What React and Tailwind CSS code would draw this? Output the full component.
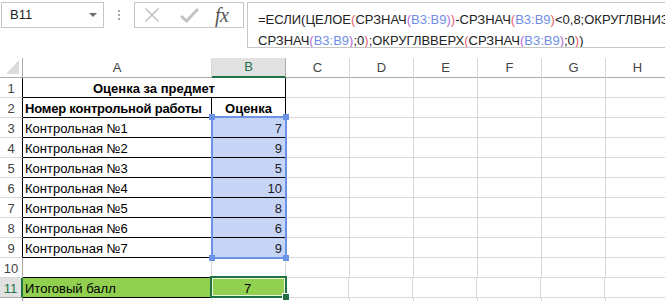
import React from "react";

const COLS = [
  { key: "A", w: "w-[189px]" },
  { key: "B", w: "w-[74px]" },
  { key: "C", w: "w-[64px]" },
  { key: "D", w: "w-[64px]" },
  { key: "E", w: "w-[64px]" },
  { key: "F", w: "w-[64px]" },
  { key: "G", w: "w-[64px]" },
  { key: "H", w: "w-[64px]" },
];

const marks = [
  ["Контрольная №1", 7],
  ["Контрольная №2", 9],
  ["Контрольная №3", 5],
  ["Контрольная №4", 10],
  ["Контрольная №5", 8],
  ["Контрольная №6", 6],
  ["Контрольная №7", 9],
];

// formula bar pieces: k = black, r = level-1 paren, p = level-2 paren, b = reference
const line1 = [
  ["k", "=ЕСЛИ(ЦЕЛОЕ"], ["r", "("], ["k", "СРЗНАЧ"], ["p", "("], ["b", "B3:B9"], ["p", ")"], ["r", ")"],
  ["k", "-СРЗНАЧ"], ["r", "("], ["b", "B3:B9"], ["r", ")"], ["k", "<0,8;ОКРУГЛВНИЗ"], ["r", "("],
];
const line2 = [
  ["k", "СРЗНАЧ"], ["p", "("], ["b", "B3:B9"], ["p", ")"], ["k", ";0"], ["r", ")"],
  ["k", ";ОКРУГЛВВЕРХ"], ["r", "("], ["k", "СРЗНАЧ"], ["p", "("], ["b", "B3:B9"], ["p", ")"],
  ["k", ";0"], ["r", ")"], ["k", ")"],
];

const tone = {
  k: "text-[#222]",
  r: "text-[#e8606f]",
  p: "text-[#b36ad8]",
  b: "text-[#6f8fe6]",
};

function Formula({ parts }) {
  return (
    <div className="h-[21px] whitespace-nowrap">
      {parts.map(([t, s], i) => (
        <span key={i} className={tone[t]}>
          {s}
        </span>
      ))}
    </div>
  );
}

function FormulaBar() {
  return (
    <div className="flex items-start h-[58px] pt-[2px] pl-[1px] text-[13px]">
      <div className="w-[103px] h-[26px] border border-[#c6c6c6] flex items-center pl-[8px] pr-[6px] text-[#222]">
        <span className="flex-1">B11</span>
        <span className="w-0 h-0 border-l-[4px] border-r-[4px] border-t-[4px] border-l-transparent border-r-transparent border-t-[#6d6d6d]" />
      </div>
      <div className="w-[30px] h-[26px] flex flex-col items-center justify-center gap-[2px]">
        <span className="w-[2px] h-[2px] bg-[#a6a6a6]" />
        <span className="w-[2px] h-[2px] bg-[#a6a6a6]" />
        <span className="w-[2px] h-[2px] bg-[#a6a6a6]" />
      </div>
      <div className="w-[110px] h-[26px] border border-[#c6c6c6] flex items-center pl-[9px]">
        <svg width="16" height="16" viewBox="0 0 16 16" className="mr-[20px]">
          <path d="M1.5 1.5 L14.5 14.5 M14.5 1.5 L1.5 14.5" stroke="#c3c3c3" strokeWidth="1.6" fill="none" />
        </svg>
        <svg width="19" height="16" viewBox="0 0 19 16" className="mr-[16px]">
          <path d="M1 9 L6.5 14 L18 2" stroke="#c3c3c3" strokeWidth="3" fill="none" />
        </svg>
        <span className="text-[20px] italic text-[#555] font-['Liberation_Serif',serif] leading-none tracking-[-0.5px]">
          fx
        </span>
      </div>
      <div className="ml-[3px] flex-1 h-[46px] border border-r-0 border-[#c6c6c6] pl-[10px] pt-[6px] leading-[21px] overflow-hidden text-[13px]">
        <Formula parts={line1} />
        <Formula parts={line2} />
      </div>
    </div>
  );
}

function HeaderRow() {
  return (
    <div className="flex h-[20px]">
      <div className="w-[23px] shrink-0 border-r border-b border-[#ababab]">
        <svg width="22" height="19" viewBox="0 0 22 19">
          <polygon points="19,2 19,16 6,16" fill="#dcdcdc" />
        </svg>
      </div>
      {COLS.map((c) =>
        c.key === "B" ? (
          <div
            key={c.key}
            className={`${c.w} shrink-0 bg-[#e1e1e1] border-r border-[#ababab] border-b-2 border-b-[#217346] flex items-center justify-center text-[#217346] text-[13px]`}
          >
            {c.key}
          </div>
        ) : (
          <div
            key={c.key}
            className={`${c.w} shrink-0 border-r border-[#d9d9d9] border-b border-b-[#ababab] flex items-center justify-center text-[#444] text-[13px]`}
          >
            {c.key}
          </div>
        )
      )}
    </div>
  );
}

function RowHead({ n, mode }) {
  if (mode === "active") {
    return (
      <div className="w-[23px] shrink-0 bg-[#e1e1e1] border-r-2 border-[#217346] border-b border-b-[#ababab] flex items-end justify-center leading-[16px] text-[#217346] text-[13px]">
        {n}
      </div>
    );
  }
  return (
    <div
      className={`w-[23px] shrink-0 border-b border-[#d9d9d9] border-r flex items-end justify-center leading-[16px] text-[#444] text-[13px] ${
        mode === "table" ? "border-r-black" : "border-r-[#ababab]"
      }`}
    >
      {n}
    </div>
  );
}

function Blank({ w, dark }) {
  return (
    <div
      className={`${w} shrink-0 border-r border-b border-[#d9d9d9] ${dark ? "border-b-black" : ""}`}
    />
  );
}

function Rest() {
  return COLS.slice(2).map((c) => <Blank key={c.key} w={c.w} />);
}

export default function App() {
  return (
    <div className="w-[665px] h-[301px] overflow-hidden bg-white font-['Liberation_Sans',Arial,sans-serif] text-black">
      <FormulaBar />
      <div className="relative text-[13px]">
        <HeaderRow />

        {/* row 1 - merged title */}
        <div className="flex h-[20px]">
          <RowHead n={1} mode="table" />
          <div className="w-[263px] shrink-0 border-r border-b border-black flex items-end justify-center leading-[16px] font-bold">
            Оценка за предмет
          </div>
          <Rest />
        </div>

        {/* row 2 */}
        <div className="flex h-[20px]">
          <RowHead n={2} mode="table" />
          <div className="w-[189px] shrink-0 border-r border-b border-black flex items-end pl-[2px] leading-[16px] font-bold whitespace-nowrap tracking-[-0.2px]">
            Номер контрольной работы
          </div>
          <div className="w-[74px] shrink-0 border-r border-b border-black flex items-end justify-center leading-[16px] font-bold">
            Оценка
          </div>
          <Rest />
        </div>

        {marks.map(([name, v], i) => (
          <div key={name} className="flex h-[20px]">
            <RowHead n={i + 3} mode="table" />
            <div className="w-[189px] shrink-0 border-r border-b border-black flex items-end pl-[2px] leading-[16px]">
              {name}
            </div>
            <div className="w-[74px] shrink-0 bg-[#c6d4f5] border-r border-b border-black flex items-end justify-end pr-[3px] leading-[16px] text-[#1b1b2e]">
              {v}
            </div>
            <Rest />
          </div>
        ))}

        {/* row 10 */}
        <div className="flex h-[20px]">
          <RowHead n={10} />
          <Blank w="w-[189px]" dark />
          <Blank w="w-[74px]" />
          <Rest />
        </div>

        {/* row 11 */}
        <div className="flex h-[20px]">
          <RowHead n={11} mode="active" />
          <div className="w-[188px] shrink-0 bg-[#92d050] border-r border-b border-black border-r-[#d9d9d9] flex items-end pl-[2px] leading-[16px]">
            Итоговый балл
          </div>
          <div className="w-[74px] shrink-0 bg-[#92d050] border-r border-b border-[#d9d9d9] flex items-end justify-center leading-[16px]">
            7
          </div>
          <Rest />
        </div>

        {/* row 12, only its top edge is in view */}
        <div className="flex h-[20px]">
          <RowHead n="" />
          <Blank w="w-[189px]" />
          <Blank w="w-[74px]" />
          <Rest />
        </div>

        {/* selection B3:B9 */}
        <div className="absolute left-[211px] top-[58px] w-[76px] h-[143px] border-2 border-[#6c92e6] pointer-events-none">
          <span className="absolute -left-[4px] -top-[4px] w-[6px] h-[6px] bg-[#6c92e6]" />
          <span className="absolute -right-[4px] -top-[4px] w-[6px] h-[6px] bg-[#6c92e6]" />
          <span className="absolute -left-[4px] -bottom-[4px] w-[6px] h-[6px] bg-[#6c92e6]" />
          <span className="absolute -right-[4px] -bottom-[4px] w-[6px] h-[6px] bg-[#6c92e6]" />
        </div>

        {/* active cell B11 */}
        <div className="absolute left-[210px] top-[218px] w-[77px] h-[22px] border-2 border-[#217346] pointer-events-none">
          <div className="w-full h-full border border-[#e8f5d8]" />
          <span className="absolute -right-[4px] -bottom-[4px] w-[7px] h-[7px] bg-[#217346] border-l border-t border-white" />
        </div>
      </div>
    </div>
  );
}
